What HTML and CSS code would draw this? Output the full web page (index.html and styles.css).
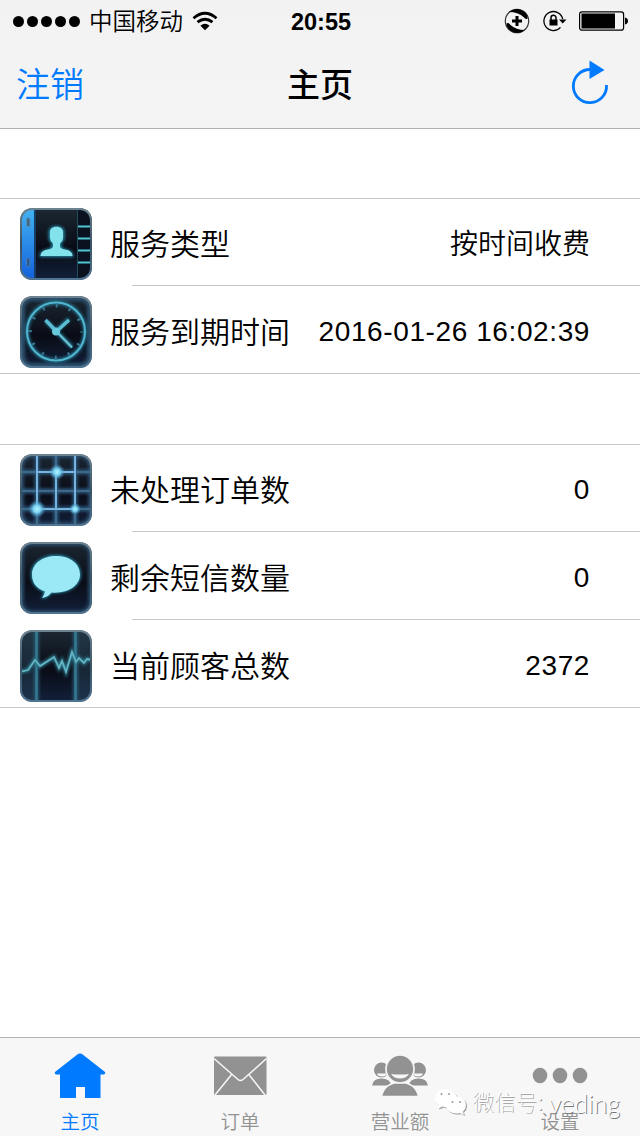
FILE: index.html
```html
<!DOCTYPE html>
<html lang="zh-CN">
<head>
    <meta charset="UTF-8">
    <meta name="viewport" content="width=device-width, initial-scale=1.0">
    <title>主页</title>
    <link rel="stylesheet" href="styles.css">
</head>
<body>

    <!-- Shared gradients for the row icons -->
    <svg class="defs" width="0" height="0">
        <defs>
            <linearGradient id="tile" x1="0" y1="0" x2="0" y2="1">
                <stop offset="0" stop-color="#1c2833"/>
                <stop offset="0.55" stop-color="#090c16"/>
                <stop offset="1" stop-color="#12203a"/>
            </linearGradient>
            <linearGradient id="spine" x1="0" y1="0" x2="0" y2="1">
                <stop offset="0" stop-color="#43b4f3"/>
                <stop offset="1" stop-color="#1260dc"/>
            </linearGradient>
            <linearGradient id="edge" x1="0" y1="0" x2="0" y2="1">
                <stop offset="0" stop-color="#6d8390"/>
                <stop offset="0.5" stop-color="#3a5363"/>
                <stop offset="1" stop-color="#4f7390"/>
            </linearGradient>
            <radialGradient id="spot">
                <stop offset="0" stop-color="#b4f4ff"/>
                <stop offset="0.4" stop-color="#7cd5f4"/>
                <stop offset="1" stop-color="#3d8fc4" stop-opacity="0"/>
            </radialGradient>
            <filter id="glow" x="-30%" y="-30%" width="160%" height="160%">
                <feGaussianBlur stdDeviation="1.6"/>
            </filter>
            <clipPath id="round"><rect x="0.5" y="0.5" width="71" height="71" rx="11"/></clipPath>
        </defs>
    </svg>

    <!-- Header -->
    <header class="header">
        <div class="status-bar">
            <div class="status-left">
                <svg width="68" height="12" viewBox="0 0 68 12">
                    <circle cx="5.5" cy="6.5" r="5.5"/><circle cx="19.5" cy="6.5" r="5.5"/><circle cx="33.5" cy="6.5" r="5.5"/><circle cx="47.5" cy="6.5" r="5.5"/><circle cx="61.5" cy="6.5" r="5.5"/>
                </svg>
                <span class="carrier">中国移动</span>
                <svg class="wifi" width="26" height="20" viewBox="0 0 26 20">
                    <path d="M1.5 7.2Q13-2.6 24.5 7.2M5.5 11.2Q13 5.2 20.5 11.2" fill="none" stroke="#000" stroke-width="2.8"/>
                    <path d="M8.4 14.8Q13 10.8 17.6 14.8L13 19.2z"/>
                </svg>
            </div>
            <span class="time">20:55</span>
            <div class="status-right">
                <svg width="26" height="26" viewBox="0 0 26 26">
                    <circle cx="13" cy="13" r="11.7" fill="none" stroke="#333" stroke-width="1.2"/>
                    <path d="M5 4Q13-2 20.5 4Q24 7 23.5 10.5Q22 12 19.5 9Q14 4 5 4z"/>
                    <path d="M21 22Q13 28 5.5 22Q2 19 2.5 15.5Q4 14 6.5 17Q12 22 21 22z"/>
                    <path d="M13 8v10M8 13h10" stroke="#000" stroke-width="3"/>
                </svg>
                <svg class="lock" width="24" height="22" viewBox="0 0 24 22">
                    <path d="M17.5 17.4A9.5 9.5 0 1 1 19.7 9" fill="none" stroke="#000" stroke-width="1.3"/>
                    <path d="M16 9.5h7.5L19.7 13.5zM6.5 9.5h8v6h-8z"/>
                    <path d="M8 10V7.7a2.5 2.5 0 0 1 5 0V10" fill="none" stroke="#000" stroke-width="1.5"/>
                </svg>
                <svg width="50" height="20" viewBox="0 0 50 20">
                    <rect x="0.6" y="0.9" width="44" height="18.3" rx="2.5" fill="none" stroke="#000" stroke-width="1.2"/>
                    <path d="M2.5 2.5h33.500v15h-33.500zM46 6.5q3 .6 3 3.500t-3 3.500z"/>
                </svg>
            </div>
        </div>
        <div class="nav-bar">
            <a class="logout">注销</a>
            <h1>主页</h1>
            <svg class="refresh" width="38" height="46" viewBox="0 0 38 46">
                <path d="M19 9.5A16.6 16.6 0 1 0 35.5 25" fill="none" stroke="#007aff" stroke-width="2.8"/>
                <path d="M18.5 0.5l15 9.5-15 9z" fill="#007aff"/>
            </svg>
        </div>
    </header>

    <!-- Account info -->
    <main class="content">
        <section class="group">
            <div class="row">
                <svg class="icon" viewBox="0 0 72 72">
                    <g clip-path="url(#round)">
                        <rect width="72" height="72" fill="url(#tile)"/>
                        <rect width="15" height="72" fill="url(#spine)"/>
                        <path d="M15 0v72" stroke="#173d66" stroke-width="2"/>
                        <rect x="6.5" y="10" width="3.5" height="8.5" rx="1" fill="#46657f" stroke="#4b93c2"/>
                        <rect x="6.5" y="50" width="3.5" height="8.5" rx="1" fill="#35588a" stroke="#3b80cc"/>
                        <rect x="57" width="15" height="72" fill="#09121e"/>
                        <path d="M57.5 0v72" stroke="#214d5d"/>
                        <path d="M58 18.5h14M58 30.5h14M58 42.5h14M58 54.5h14" stroke="#226f80" stroke-width="3"/>
                        <path d="M58 18.5h14M58 30.5h14M58 42.5h14M58 54.5h14" stroke="#5cc0ca" stroke-width="1.2"/>
                        <path class="shine" d="M28.5 24c0-8 16-8 16 0v6q0 3-3 5v3q0 2 4 3q8 1 8 8H19.5q0-7 8-8q4-1 4-3v-3q-3-2-3-5z" filter="url(#glow)"/>
                        <path d="M30 24c0-7 13-7 13 0v6q0 3-3 5.500v3q0 2 5 3q7.500 1 7.500 6.500H20.500q0-5.500 7.500-6.500q5-1 5-3v-3q-3-2.500-3-5.500z" fill="#83e3ec"/>
                    </g>
                    <rect x="1" y="1" width="70" height="70" rx="11" fill="none" stroke="url(#edge)" stroke-width="2"/>
                </svg>
                <span class="label">服务类型</span>
                <span class="value plan">按时间收费</span>
            </div>
            <div class="row">
                <svg class="icon" viewBox="0 0 72 72">
                    <g clip-path="url(#round)">
                        <rect width="72" height="72" fill="url(#tile)"/>
                        <rect x="1" y="1" width="70" height="70" rx="11" fill="none" stroke="#2b4f6c" stroke-width="8" filter="url(#glow)"/>
                        <g fill="none" stroke="#24758f" stroke-width="4" filter="url(#glow)">
                            <circle cx="36" cy="35.5" r="29"/><path d="M26 25l10 10 13-12M36 35l16 16"/>
                        </g>
                        <circle cx="36" cy="35.5" r="29" fill="none" stroke="#52b5cf" stroke-width="2"/>
                        <circle cx="36" cy="35.5" r="26" fill="none" stroke="#37768f" stroke-width="4" stroke-dasharray="2 11.614" stroke-dashoffset="1"/>
                        <path d="M25.5 24L37 36M49 24L37 35" stroke="#5bbdd2" stroke-width="3.5"/>
                        <path d="M35 34l17 17.5" stroke="#67bfd4" stroke-width="2.4"/>
                        <circle cx="36" cy="35.5" r="4" fill="#65c8dc"/>
                    </g>
                    <rect x="1" y="1" width="70" height="70" rx="11" fill="none" stroke="url(#edge)" stroke-width="2"/>
                </svg>
                <span class="label">服务到期时间</span>
                <span class="value">2016-01-26 16:02:39</span>
            </div>
        </section>

        <section class="group">
            <div class="row">
                <svg class="icon" viewBox="0 0 72 72">
                    <g clip-path="url(#round)">
                        <rect width="72" height="72" fill="url(#tile)"/>
                        <rect x="1" y="1" width="70" height="70" rx="11" fill="none" stroke="#294c69" stroke-width="6" filter="url(#glow)"/>
                        <path d="M17 0v72M36 0v72M55 0v72M0 18h72M0 37h72M0 55h72" stroke="#2b5679" stroke-width="5" filter="url(#glow)"/>
                        <path d="M17 0v72M36 0v72M55 0v72M0 18h72M0 37h72M0 55h72" stroke="#5580a2" stroke-width="1.6" opacity="0.7"/>
                        <path d="M17 0v55h38V0M17 18h38M36 18v37" fill="none" stroke="#78b2de" stroke-width="2"/>
                        <circle cx="37" cy="18" r="8" fill="url(#spot)"/>
                        <circle cx="17" cy="55" r="9" fill="url(#spot)"/>
                        <circle cx="55" cy="55" r="6" fill="url(#spot)"/>
                    </g>
                    <rect x="1" y="1" width="70" height="70" rx="11" fill="none" stroke="url(#edge)" stroke-width="2"/>
                </svg>
                <span class="label">未处理订单数</span>
                <span class="value">0</span>
            </div>
            <div class="row">
                <svg class="icon" viewBox="0 0 72 72">
                    <g clip-path="url(#round)">
                        <rect width="72" height="72" fill="url(#tile)"/>
                        <rect x="1" y="1" width="70" height="70" rx="11" fill="none" stroke="#264663" stroke-width="6" filter="url(#glow)"/>
                        <path class="shine" d="M36 13C22 13 11 21 11 32.5Q11 45 24 50q-1 4-3 7q7-1 11-6C49 52 61 44 61 32.5S50 13 36 13z" filter="url(#glow)"/>
                        <path d="M36 14C22 14 12 22 12 32.5Q12 45 25 49.5q-1 4-3 6.500q6-1 9.500-5.500C48 52 60 43.500 60 32.500S50 14 36 14z" fill="#9be9f6"/>
                    </g>
                    <rect x="1" y="1" width="70" height="70" rx="11" fill="none" stroke="url(#edge)" stroke-width="2"/>
                </svg>
                <span class="label">剩余短信数量</span>
                <span class="value">0</span>
            </div>
            <div class="row">
                <svg class="icon" viewBox="0 0 72 72">
                    <g clip-path="url(#round)">
                        <rect width="72" height="72" fill="url(#tile)"/>
                        <path d="M0 0h17v72H0zM55 0h17v72H55z" fill="#2b4a60" opacity="0.45"/>
                        <path d="M16.5 0v72M55.5 0v72" stroke="#24576f" stroke-width="5" filter="url(#glow)"/>
                        <path d="M16.5 0v72M55.5 0v72" stroke="#35788f" stroke-width="2.5"/>
                        <path d="M0 42L8 40 15 30 20 36 34 27 39 38 42 31 46 42 52 22 56 32 59 28 64 33 67 29 72 30" fill="none" stroke="#2a7388" stroke-width="4" filter="url(#glow)"/>
                        <path d="M0 42L8 40 15 30 20 36 34 27 39 38 42 31 46 42 52 22 56 32 59 28 64 33 67 29 72 30" fill="none" stroke="#64b4c4" stroke-width="1.8"/>
                    </g>
                    <rect x="1" y="1" width="70" height="70" rx="11" fill="none" stroke="url(#edge)" stroke-width="2"/>
                </svg>
                <span class="label">当前顾客总数</span>
                <span class="value">2372</span>
            </div>
        </section>
    </main>

    <!-- Tab bar -->
    <footer class="tab-bar">
        <a class="tab active">
            <svg width="56" height="50" viewBox="0 0 56 50"><path d="M28 1.5q1.500 0 3 1.200L53 20q1 1.500-1 2.500h-3.500V46H33V35h-9v11H8V22.500H4q-2-1-1-2.500L25 2.700q1.500-1.200 3-1.200z"/></svg>
            <span>主页</span>
        </a>
        <a class="tab">
            <svg width="56" height="50" viewBox="0 0 56 50">
                <rect x="2" y="4.5" width="52.5" height="38.5" rx="1"/>
                <path d="M2 6.5l24 21q2.500 2 5 0l23.500-21M20 22L3 43M36.500 22L53 43" fill="none" stroke="#f7f7f7" stroke-width="1.5"/>
            </svg>
            <span>订单</span>
        </a>
        <a class="tab">
            <svg width="56" height="50" viewBox="0 0 56 50">
                <circle cx="9.5" cy="18" r="7.5"/><circle cx="46.5" cy="18" r="7.5"/>
                <path d="M0 33.5q1-7 9.500-7t10 7zM36.500 33.500q1.500-7 10-7t9.500 7z"/>
                <path d="M5 21.5h10q-1 3-5 3t-5-3zM41 21.500h10q-1 3-5 3t-5-3z" fill="#f7f7f7"/>
                <path d="M9.500 44.500q3-14 18.500-14t18.500 14z" stroke="#f7f7f7" stroke-width="1.5"/>
                <circle cx="28" cy="17" r="14" stroke="#f7f7f7" stroke-width="1.7"/>
                <path d="M19 22q9 1 18 0q-3 4.500-9 4.500t-9-4.500z" fill="#f7f7f7"/>
            </svg>
            <span>营业额</span>
        </a>
        <a class="tab">
            <svg width="56" height="50" viewBox="0 0 56 50"><ellipse cx="8" cy="23.5" rx="7.3" ry="7.8"/><ellipse cx="28" cy="23.5" rx="7.3" ry="7.8"/><ellipse cx="48" cy="23.5" rx="7.3" ry="7.8"/></svg>
            <span>设置</span>
        </a>

        <div class="watermark">
            <svg width="34" height="30" viewBox="0 0 34 30">
                <path class="bubble" d="M12 1C5 1 1 5 1 10q0 4 4 7l-1 3.500 5-2q5 2 9 0 6-3 5-9T12 1z"/>
                <path class="bubble" d="M22 8.5c-6 0-10 4-10 8.500s4 8.500 10 8.500q2 0 4-.6l4 2-1-3.500q3-2.500 3-6.400C32 12 28 8.500 22 8.500z"/>
                <g fill="#999"><circle cx="7.5" cy="6" r="1"/><circle cx="15" cy="6" r="1"/><circle cx="18.5" cy="14" r="1"/><circle cx="26" cy="14" r="1"/></g>
            </svg>
            <span>微信号: </span><span class="account">veding</span>
        </div>
    </footer>

</body>
</html>
```
FILE: styles.css
```css
/* General Styles */
* {
    box-sizing: border-box;
}

body {
    margin: 0;
    height: 1136px;
    display: flex;
    flex-direction: column;
    background: #fff;
    color: #000;
    font-family: "Liberation Sans", "Noto Sans CJK SC", sans-serif;
    overflow: hidden;
}

svg {
    display: block;
    flex: none;
}

.defs {
    position: absolute;
}

/* Header */
.header {
    height: 129px;
    background: linear-gradient(#f2f2f2, #f4f4f4);
    border-bottom: 1px solid #b2b2b2;
}

.status-bar {
    display: grid;
    grid-template-columns: 1fr auto 1fr;
    align-items: center;
    height: 40px;
    padding: 0 11px 0 13px;
    font-size: 24px;
    line-height: 40px;
}

.status-left,
.status-right {
    display: flex;
    align-items: center;
}

.carrier {
    margin: 0 9px 0 8px;
    padding-top: 2px;
    font-size: 23.5px;
    font-weight: 350;
}

.time {
    font-weight: bold;
    font-size: 23.5px;
    padding-top: 2px;
}

.status-right {
    justify-content: flex-end;
}

.lock {
    margin: 0 12px 0 13px;
}

.nav-bar {
    display: grid;
    grid-template-columns: 1fr auto 1fr;
    align-items: center;
    height: 88px;
    padding: 0 31px 3px 16px;
    font-size: 34px;
}

.nav-bar h1 {
    margin: 0 0 0 15px;
    font-size: 33px;
    font-weight: 500;
}

.logout {
    color: #007aff;
    font-weight: 350;
}

.refresh {
    justify-self: end;
}

/* List */
.content {
    flex: 1;
    padding-top: 69px;
}

.group {
    border-top: 1px solid #c8c7cc;
    margin-bottom: 70px;
}

.row {
    display: flex;
    align-items: center;
    height: 88px;
    padding: 10px 50px 6px 20px;
    background: linear-gradient(#c8c7cc, #c8c7cc) no-repeat 132px 100% / 100% 1px;
}

.row:first-child {
    margin-top: -1px;
}

.row:last-child {
    background-position: 0 100%;
}

.icon {
    width: 72px;
    height: 72px;
}

.shine {
    fill: #258ba8;
}

.label {
    margin-left: 18px;
    padding-bottom: 4px;
    font-size: 30px;
    font-weight: 350;
}

.value {
    margin-left: auto;
    font-size: 28px;
    letter-spacing: 0.6px;
    white-space: nowrap;
}

.plan {
    padding-top: 2px;
    font-weight: 350;
    letter-spacing: 0;
    line-height: 36px;
}

/* Tab Bar */
.tab-bar {
    position: relative;
    display: flex;
    height: 99px;
    background: #f7f7f7;
    border-top: 1px solid #b2b2b2;
}

.tab {
    flex: 1;
    display: flex;
    flex-direction: column;
    align-items: center;
    padding-top: 14px;
    color: #929292;
    fill: #929292;
    font-size: 19.5px;
    font-weight: 350;
    line-height: 24px;
}

.tab span {
    margin-top: 8px;
}

.active {
    color: #007aff;
    fill: #007aff;
}

/* Watermark over the last tabs */
.watermark {
    position: absolute;
    right: 20px;
    bottom: 16px;
    display: flex;
    align-items: center;
    color: #fff;
    font-size: 21.5px;
    font-weight: 100;
    line-height: 34px;
    white-space: pre;
    text-shadow: 1px 1px 0 #999;
}

.watermark svg {
    margin-right: 4px;
}

.account {
    font-family: Lato, sans-serif;
    font-size: 25px;
    font-weight: 300;
    text-shadow: 1px 1px 0 #777;
}

.bubble {
    fill: #fff;
    filter: drop-shadow(1px 1px 0.5px #999);
}
```
